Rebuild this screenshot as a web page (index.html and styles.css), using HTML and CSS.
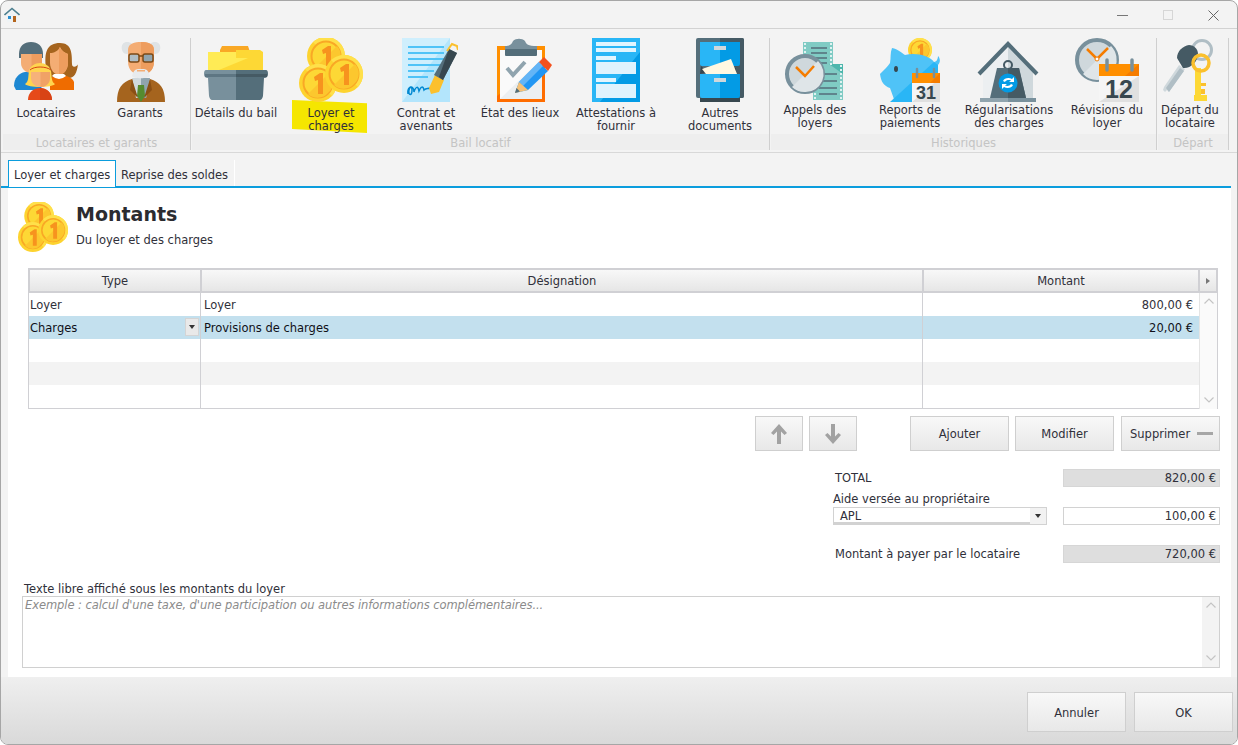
FILE: index.html
```html
<!DOCTYPE html>
<html lang="fr">
<head>
<meta charset="utf-8">
<title>Loyer et charges</title>
<link rel="stylesheet" href="styles.css">
</head>
<body>
<svg class="defs" width="0" height="0" aria-hidden="true">
  <defs>
    <g id="coin">
      <circle r="19" fill="#fdd32f"/>
      <path d="M-13-14A19 19 0 0 1 19 0 19 19 0 0 1 14 13Z" fill="#ffe04a"/>
      <circle r="14.500" fill="#fdd835" stroke="#f9a825" stroke-width="2"/>
      <path d="M-10 11 11-10A14 14 0 0 1 10 10 14 14 0 0 1-10 11Z" fill="#fcc72e"/>
      <path d="M-4-6 2-10H5V11H0V-3L-3-2Z" fill="#f7931e"/>
    </g>
    <g id="coins">
      <use href="#coin" x="27" y="18"/>
      <use href="#coin" x="19" y="45"/>
      <use href="#coin" x="45" y="36"/>
    </g>
  </defs>
</svg>
<div class="window">
  <header class="titlebar">
    <svg class="app-icon" viewBox="0 0 16 16" width="16" height="16"><path d="M3 7V15H13V7L8 3Z" fill="#eef3f5"/><path d="M0.500 8 8 1.500 15.500 8" fill="none" stroke="#4d7f8f" stroke-width="1.600"/><rect x="9" y="9" width="3" height="6" fill="#b5651d"/><rect x="4" y="9" width="3" height="3" fill="#2a8fd0"/></svg>
    <div class="win-controls">
      <span class="win-min"></span>
      <span class="win-max"></span>
      <svg class="win-close" viewBox="0 0 11 11" width="11" height="11"><path d="M0.500 0.500 10.500 10.500M10.500 0.500 0.500 10.500" stroke="#666" stroke-width="1" fill="none"/></svg>
    </div>
  </header>

  <nav class="ribbon">
    <section class="group g-tenants">
      <div class="items">
        <div class="item w88">
          <svg class="icon" viewBox="0 0 64 64" width="64" height="64">
            <path d="M0 48C0 40 5 35 11 34H24L28 52H2Z" fill="#1e88d2"/>
            <path d="M5 16C5 8 10 4 17 4 24 4 29 8 29 16V20H5Z" fill="#546e7a"/>
            <path d="M7 16H28V25C28 31 23 35 17.500 35 12 35 7 31 7 25Z" fill="#f4ad74"/>
            <path d="M17.500 16H28V25C28 31 23 35 17.500 35Z" fill="#ee9d5e"/>
            <path d="M32 30C30 14 33 5 46 5 58 5 58 16 58 26 58 31 64 28 64 26 63 35 60 40 55 40H36Z" fill="#a5641e"/>
            <path d="M36 15C40 15 44 13 46 9 48 13 51 15 54 16V25C54 32 49 37 45 37 41 37 36 32 36 25Z" fill="#f4ad74"/>
            <path d="M45 9C48 13 51 15 54 16V25C54 32 49 37 45 37Z" fill="#ee9d5e"/>
            <path d="M36 52V42C38 38 42 37 45 37 49 37 58 38 60 44V52Z" fill="#ef6c00"/>
            <path d="M38 38Q45 44 52 38L50 36H40Z" fill="#fff"/>
            <path d="M14 62C14 54 20 50 26 50 32 50 38 54 38 62Z" fill="#e64a19"/>
            <path d="M26 50C32 50 38 54 38 62H26Z" fill="#d84315"/>
            <path d="M11 46C15 44 14 38 15 33 16 28 21 25 26 25 31 25 36 28 37 33 38 38 37 44 41 46 38 50 14 50 11 46Z" fill="#ffd54f"/>
            <path d="M17 34H36V40C36 46 31 49 26.500 49 22 49 17 46 17 40Z" fill="#f6b27a"/>
            <path d="M26.500 34H36V40C36 46 31 49 26.500 49Z" fill="#f0a266"/>
            <path d="M16 32C20 28 32 28 37 32" fill="none" stroke="#d84315" stroke-width="1"/>
          </svg>
          <span class="label">Locataires</span>
        </div>
        <div class="item w100">
          <svg class="icon" viewBox="0 0 64 64" width="64" height="64">
            <path d="M9 64C9 50 14 44 24 41L33 39 42 41C52 44 57 50 57 64Z" fill="#a5641e"/>
            <path d="M24 40H42L38 60H28Z" fill="#cfd8dc"/>
            <path d="M33 40H42L38 60H33Z" fill="#90a4ae"/>
            <path d="M30 47H36L37 58 33 64 29 58Z" fill="#558b2f"/>
            <path d="M24 41 30 60 22 52ZM42 41 36 60 44 52Z" fill="#8a4f14"/>
            <path d="M14 12C12 4 20 2 24 6H42C46 2 54 4 52 12 50 18 44 16 42 14H24C22 16 16 18 14 12Z" fill="#dfe3e5"/>
            <path d="M20 12C20 5 27 4 33 4 39 4 46 5 46 12V24C46 32 40 37 33 37 26 37 20 32 20 24Z" fill="#f4ad74"/>
            <path d="M33 4C39 4 46 5 46 12V24C46 32 40 37 33 37Z" fill="#ee9d5e"/>
            <path d="M24 38C26 30 30 31 33 31 36 31 40 30 42 38 40 41 26 41 24 38Z" fill="#e8ebed"/>
            <rect x="29" y="32" width="8" height="1.500" fill="#f4ad74"/>
            <rect x="21" y="16" width="10" height="8" rx="2" fill="#b0bec5" stroke="#7b4a17" stroke-width="1.500"/>
            <rect x="35" y="16" width="10" height="8" rx="2" fill="#90a4ae" stroke="#7b4a17" stroke-width="1.500"/>
            <path d="M31 18H35" stroke="#7b4a17" stroke-width="1.500"/>
          </svg>
          <span class="label">Garants</span>
        </div>
      </div>
      <div class="band">Locataires et garants</div>
    </section>

    <section class="group g-lease">
      <div class="items">
        <div class="item w90">
          <svg class="icon" viewBox="0 0 64 64" width="64" height="64">
            <path d="M16 12 18 8H44L46 14H16Z" fill="#f9a825"/>
            <path d="M4 14H59V34H4Z" fill="#ffeb55"/>
            <path d="M10 34 59 14V34Z" fill="#fdd835"/>
            <path d="M32 12H56L59 14V20H32Z" fill="#fdd835"/>
            <path d="M2 32H32V62H8Q6 62 5 58L4 40Q0 40 0 36 0 32 2 32Z" fill="#78909c"/>
            <path d="M32 32H62Q64 32 64 36 64 40 60 40L59 58Q58 62 56 62H32Z" fill="#546e7a"/>
            <rect x="1" y="36" width="31" height="3" fill="#5e7683"/>
            <rect x="32" y="36" width="31" height="3" fill="#455a64"/>
          </svg>
          <span class="label">Détails du bail</span>
        </div>
        <div class="item item-active w100">
          <svg class="icon" viewBox="0 0 64 64" width="64" height="64"><use href="#coins"/></svg>
          <span class="label">Loyer et charges</span>
        </div>
        <div class="item w90">
          <svg class="icon" viewBox="0 0 64 64" width="64" height="64">
            <rect x="8" width="48" height="64" fill="#b3e5fc"/>
            <path d="M8 64V0H56Z" fill="#e1f5fe" opacity=".6"/>
            <path d="M14 9H50M14 15H50M14 21H50M14 27H50M14 33H40M14 39H34" stroke="#4fc3f7" stroke-width="2"/>
            <path d="M14 56C13 50 18 46 18 52 18 58 14 58 15 52 17 46 20 50 20 54 22 48 24 48 25 53 27 48 29 48 30 52 32 50 34 51 36 50" fill="none" stroke="#0288d1" stroke-width="1.500"/>
            <path d="M35 50 41 37 50 42 45 54 37 56Z" fill="#fbc02d"/>
            <path d="M40 37 55 11 63 15 49 42Z" fill="#546e7a"/>
            <path d="M55 11 63 15 49 42 45 39Z" fill="#37474f"/>
            <path d="M53 13 58 6 63 8 64 12" fill="none" stroke="#fbc02d" stroke-width="2"/>
          </svg>
          <span class="label">Contrat et avenants</span>
        </div>
        <div class="item w98">
          <svg class="icon" viewBox="0 0 64 64" width="64" height="64">
            <rect x="9" y="8" width="48" height="56" fill="#ff8f00"/>
            <path d="M9 64V58L57 20V64Z" fill="#ff6d00"/>
            <rect x="12" y="12" width="42" height="49" fill="#fafafa"/>
            <path d="M12 61 54 20V61Z" fill="#eceff1"/>
            <path d="M17 12V8C22 8 24 6 25 3 28 0 34 0 37 3 38 6 40 8 49 8V12Z" fill="#78909c"/>
            <rect x="17" y="11" width="32" height="7" rx="1" fill="#546e7a"/>
            <path d="M19 30 25 37 37 24" fill="none" stroke="#90a4ae" stroke-width="4"/>
            <path d="M27 55 31 44 51 24 60 33 40 52Z" fill="#2196f3"/>
            <path d="M31 44 51 24 55 28 35 48Z" fill="#64b5f6"/>
            <path d="M51 24 56 19 64 27 60 33Z" fill="#f4511e"/>
            <path d="M27 55 31 44 40 52Z" fill="#f6c177"/>
            <path d="M27 55 28.500 50 32 53.500Z" fill="#546e7a"/>
          </svg>
          <span class="label">État des lieux</span>
        </div>
        <div class="item w94">
          <svg class="icon" viewBox="0 0 64 64" width="64" height="64">
            <rect x="8" width="48" height="64" fill="#29b6f6"/>
            <path d="M16 64 56 14V64Z" fill="#039be5"/>
            <path d="M12 4H52V8H12ZM12 10H52V14H12ZM12 18H32V22H12ZM12 40H32V44H12Z" fill="#e1f5fe"/>
            <path d="M12 24H52V36H12ZM12 46H52V60H12Z" fill="#dff3fd"/>
          </svg>
          <span class="label">Attestations à fournir</span>
        </div>
        <div class="item item-last w98">
          <svg class="icon" viewBox="0 0 64 64" width="64" height="64">
            <rect x="8" width="48" height="60" rx="2" fill="#546e7a"/>
            <path d="M32 0H54Q56 0 56 2V58Q56 60 54 60H32Z" fill="#455a64"/>
            <rect x="12" y="60" width="40" height="4" fill="#37474f"/>
            <path d="M12 4H32V28H14Q12 28 12 26Z" fill="#29b6f6"/>
            <path d="M32 4H52V26Q52 28 50 28H32Z" fill="#039be5"/>
            <rect x="26" y="8" width="12" height="4" fill="#cfd8dc"/>
            <path d="M13 28 22 36H48V30L12 36Z" fill="#37474f"/>
            <path d="M14 31 43 21 49 36H18Z" fill="#fff8e1"/>
            <path d="M12 36H32V60H14Q12 60 12 58Z" fill="#29b6f6"/>
            <path d="M32 36H52V58Q52 60 50 60H32Z" fill="#039be5"/>
            <rect x="26" y="40" width="12" height="4" fill="#cfd8dc"/>
          </svg>
          <span class="label">Autres documents</span>
        </div>
      </div>
      <div class="band">Bail locatif</div>
    </section>

    <section class="group g-history">
      <div class="items">
        <div class="item item-high w90">
          <svg class="icon" viewBox="0 0 64 64" width="64" height="64">
            <rect x="20" y="4" width="30" height="36" fill="#80cbc4"/>
            <rect x="30" y="26" width="30" height="36" fill="#80cbc4"/>
            <path d="M46 26H60V36Z" fill="#4db6ac"/>
            <path d="M22 5V39M48 5V27M32 27V61M58 27V61" stroke="#e0f2f1" stroke-width="2" stroke-dasharray="2 2"/>
            <path d="M28 10H44M28 15H44M28 20H44M28 25H44M36 36H54M36 43H54M36 50H54M36 56H54" stroke="#546e7a" stroke-width="1.500"/>
            <circle cx="22" cy="36" r="18" fill="#cfd8dc" stroke="#78909c" stroke-width="4"/>
            <path d="M9 49 35 23A18 18 0 0 1 22 54 18 18 0 0 1 9 49Z" fill="#dfe5e8"/>
            <path d="M13 29 22 38 31 28" fill="none" stroke="#f57c00" stroke-width="2.500"/>
          </svg>
          <span class="label">Appels des loyers</span>
        </div>
        <div class="item item-high w100">
          <svg class="icon" viewBox="0 0 64 64" width="64" height="64">
            <use href="#coin" transform="translate(42 12) scale(.63)"/>
            <path d="M14 10C20 11 24 15 27 17 38 14 52 18 56 24 59 24 60 20 60 18 62 20 63 24 60 27 L60 64H17L12 50C6 48 3 44 2 36 6 32 10 28 12 25 13 20 12 15 14 10Z" fill="#4fc3f7"/>
            <path d="M12 64 56 24 60 27V64Z" fill="#29b6f6"/>
            <ellipse cx="18" cy="31" rx="2" ry="3" fill="#37474f"/>
            <rect x="34" y="35" width="28" height="29" fill="#f5f5f5"/>
            <path d="M34 64 62 40V64Z" fill="#e0e0e0"/>
            <rect x="34" y="35" width="28" height="10" fill="#ff8f00"/>
            <path d="M52 45 62 35V45Z" fill="#f57c00"/>
            <path d="M39 31V39M56 31V39" stroke="#78909c" stroke-width="2.500" stroke-linecap="round"/>
            <text class="cal-31" x="48" y="61" text-anchor="middle">31</text>
          </svg>
          <span class="label">Reports de paiements</span>
        </div>
        <div class="item item-high w98">
          <svg class="icon" viewBox="0 0 64 64" width="64" height="64">
            <path d="M6 60V30L31 7 56 30V60Z" fill="#eceff1"/>
            <path d="M31 7 56 30V60H31Z" fill="#cfd8dc"/>
            <path d="M2 36 31 6 60 36" fill="none" stroke="#546e7a" stroke-width="4"/>
            <circle cx="31" cy="27" r="4" fill="none" stroke="#455a64" stroke-width="2"/>
            <path d="M20 30H42L49 60H13Z" fill="#546e7a"/>
            <path d="M31 30H42L49 60H31Z" fill="#455a64"/>
            <circle cx="31" cy="45" r="9.500" fill="#039be5"/>
            <path d="M26 43C27 40 32 39 35 41L37 39V44H32L34 42.500C32 41.500 29 42 28 44ZM36 47C35 50 30 51 27 49L25 51V46H30L28 47.500C30 48.500 33 48 34 46Z" fill="#fff"/>
            <rect x="3" y="60" width="28" height="4" fill="#90a4ae"/>
            <rect x="31" y="60" width="28" height="4" fill="#78909c"/>
          </svg>
          <span class="label">Régularisations des charges</span>
        </div>
        <div class="item item-high w98">
          <svg class="icon" viewBox="0 0 64 64" width="64" height="64">
            <circle cx="22" cy="22" r="20" fill="#cfd8dc" stroke="#78909c" stroke-width="4"/>
            <path d="M8 36 36 8A20 20 0 0 1 22 42 20 20 0 0 1 8 36Z" fill="#dfe5e8"/>
            <path d="M12 11 22 21 33 10" fill="none" stroke="#f57c00" stroke-width="2.500"/>
            <circle cx="22" cy="21" r="2" fill="#fff" stroke="#f57c00"/>
            <rect x="24" y="26" width="40" height="38" fill="#f5f5f5"/>
            <path d="M24 64 64 38V64Z" fill="#e0e0e0"/>
            <rect x="24" y="26" width="40" height="12" fill="#ff8f00"/>
            <path d="M50 38 64 26V38Z" fill="#f57c00"/>
            <path d="M32 22V32M57 22V32" stroke="#78909c" stroke-width="3.500" stroke-linecap="round"/>
            <text class="cal-12" x="44" y="60" text-anchor="middle">12</text>
          </svg>
          <span class="label">Révisions du loyer</span>
        </div>
      </div>
      <div class="band">Historiques</div>
    </section>

    <section class="group g-leave">
      <div class="items">
        <div class="item item-high item-narrow w66">
          <svg class="icon" viewBox="0 0 64 64" width="64" height="64">
            <circle cx="44" cy="12" r="9.500" fill="none" stroke="#b0bec5" stroke-width="3"/>
            <path d="M6 49 21 27 27 31 11 54 9 52 7 54 5 52Z" fill="#cfd8dc"/>
            <path d="M11 54 8 50 22 30 26 33Z" fill="#b0bec5"/>
            <path d="M19 20C19 13 25 8 31 7 36 7 40 11 40 16 40 24 32 31 25 30Z" fill="#455a64"/>
            <rect x="37" y="30" width="6" height="28" fill="#fdd835"/>
            <path d="M43 45H48V48H43ZM43 51H47V56H43Z" fill="#fbc02d"/>
            <rect x="36" y="57" width="13" height="6" fill="#fdd835"/>
            <circle cx="43" cy="25" r="8" fill="none" stroke="#fbc02d" stroke-width="3.500"/>
          </svg>
          <span class="label">Départ du locataire</span>
        </div>
      </div>
      <div class="band">Départ</div>
    </section>
  </nav>

  <div class="tabs">
    <div class="tab tab-active">Loyer et charges</div>
    <div class="tab">Reprise des soldes</div>
  </div>

  <main class="panel">
    <div class="heading">
      <svg class="heading-icon" viewBox="0 0 64 64" width="50" height="50"><use href="#coins"/></svg>
      <div>
        <h1>Montants</h1>
        <p>Du loyer et des charges</p>
      </div>
    </div>

    <div class="grid">
      <div class="grid-head">
        <div class="th">Type</div>
        <div class="th">Désignation</div>
        <div class="th">Montant</div>
        <div class="th-more"><svg viewBox="0 0 4 6" width="4" height="6"><path d="M0 0 4 3 0 6Z" fill="#777"/></svg></div>
      </div>
      <div class="grid-main">
        <div class="rows">
          <div class="row"><div class="cell">Loyer</div><div class="cell">Loyer</div><div class="cell num">800,00 €</div></div>
          <div class="row row-sel"><div class="cell cell-drop">Charges<span class="mini-drop"><i class="caret"></i></span></div><div class="cell">Provisions de charges</div><div class="cell num">20,00 €</div></div>
          <div class="row"><div class="cell"></div><div class="cell"></div><div class="cell"></div></div>
          <div class="row row-alt"><div class="cell"></div><div class="cell"></div><div class="cell"></div></div>
          <div class="row"><div class="cell"></div><div class="cell"></div><div class="cell"></div></div>
        </div>
        <div class="vscroll">
          <svg viewBox="0 0 10 6" width="10" height="6"><path d="M0.500 5.500 5 1 9.500 5.500" fill="none" stroke="#c4c4c4" stroke-width="1.200"/></svg>
          <svg viewBox="0 0 10 6" width="10" height="6"><path d="M0.500 0.500 5 5 9.500 0.500" fill="none" stroke="#c4c4c4" stroke-width="1.200"/></svg>
        </div>
      </div>
    </div>

    <div class="actions">
      <button class="btn btn-arrow"><svg viewBox="0 0 16 20" width="16" height="20"><path d="M8 0 16 9 13.500 11 10 7.500V20H6V7.500L2.500 11 0 9Z" fill="#a2a2a2"/></svg></button>
      <button class="btn btn-arrow"><svg viewBox="0 0 16 20" width="16" height="20"><path d="M8 20 16 11 13.500 9 10 12.500V0H6V12.500L2.500 9 0 11Z" fill="#a2a2a2"/></svg></button>
      <button class="btn btn-wide btn-first">Ajouter</button>
      <button class="btn btn-wide">Modifier</button>
      <button class="btn btn-wide btn-del">Supprimer<span class="minus"></span></button>
    </div>

    <div class="summary">
      <div class="sum-row sum-total">
        <span class="sum-label">TOTAL</span>
        <output class="value value-ro">820,00 €</output>
      </div>
      <div class="sum-aide">Aide versée au propriétaire</div>
      <div class="sum-row">
        <div class="select"><span class="select-text">APL</span><span class="select-btn"><i class="caret"></i></span></div>
        <output class="value">100,00 €</output>
      </div>
      <div class="sum-row sum-pay">
        <span class="sum-label">Montant à payer par le locataire</span>
        <output class="value value-ro">720,00 €</output>
      </div>
    </div>

    <div class="notes">
      <div class="notes-label">Texte libre affiché sous les montants du loyer</div>
      <div class="notes-box">
        <div class="notes-text">Exemple : calcul d'une taxe, d'une participation ou autres informations complémentaires...</div>
        <div class="vscroll vscroll-notes">
          <svg viewBox="0 0 10 6" width="10" height="6"><path d="M0.500 5.500 5 1 9.500 5.500" fill="none" stroke="#c4c4c4" stroke-width="1.200"/></svg>
          <svg viewBox="0 0 10 6" width="10" height="6"><path d="M0.500 0.500 5 5 9.500 0.500" fill="none" stroke="#c4c4c4" stroke-width="1.200"/></svg>
        </div>
      </div>
    </div>
  </main>

  <footer class="footer">
    <button class="btn btn-foot">Annuler</button>
    <button class="btn btn-foot">OK</button>
  </footer>
</div>
</body>
</html>
```

FILE: styles.css
```css
* { box-sizing: border-box; }
html, body { margin: 0; height: 100%; background: #fff; }
body {
  font-family: "DejaVu Sans", sans-serif;
  font-size: 11.5px;
  color: #30303a;
  overflow: hidden;
}
.defs { position: absolute; }

.window {
  width: 1238px;
  height: 745px;
  display: flex;
  flex-direction: column;
  background: #f3f3f3;
  border: 1px solid #a6a6a6;
  border-radius: 8px;
  overflow: hidden;
}

/* title bar */
.titlebar {
  flex: none;
  height: 28px;
  padding: 4px 0 0 3px;
  display: flex;
  justify-content: space-between;
  border-bottom: 1px solid #d2d2d2;
}
.app-icon { display: block; margin-top: 2px; }
.win-controls {
  display: flex;
  align-items: center;
  gap: 35px;
  height: 16px;
  margin: 2px 18px 0 0;
}
.win-min { width: 11px; height: 1px; background: #777; }
.win-max { width: 10px; height: 10px; border: 1px solid #d6d6d6; }

/* ribbon */
.ribbon {
  flex: none;
  height: 124px;
  padding-top: 9px;
  display: flex;
  border-bottom: 1px solid #d8d8d8;
}
.group {
  height: 112px;
  display: flex;
  flex-direction: column;
  border-right: 1px solid #cfcfcf;
}
.g-tenants { width: 190px; padding-left: 1px; }
.g-lease { width: 579px; }
.g-history { width: 387px; }
.g-leave { width: 72px; }
.items { flex: none; height: 96px; display: flex; }
.band {
  flex: none;
  height: 16px;
  margin-left: 1px;
  background: #eeeeee;
  color: #c4c4c4;
  text-align: center;
  line-height: 19px;
}

.item {
  position: relative;
  display: flex;
  flex-direction: column;
  align-items: center;
  text-align: center;
}
.w66 { width: 66px; }
.w88 { width: 88px; }
.w90 { width: 90px; }
.w94 { width: 94px; }
.w98 { width: 98px; }
.w100 { width: 100px; }
.item-last { margin-left: 8px; }
.icon { display: block; flex: none; position: relative; }
.label {
  position: relative;
  display: block;
  width: 90px;
  margin-top: 5px;
  line-height: 13px;
}
.item-high .label { margin-top: 2px; width: 92px; }
.item-narrow .label { width: 66px; }
.item-active .label { width: 60px; }
.item-active::before {
  content: "";
  position: absolute;
  left: 11px;
  top: 62px;
  width: 75px;
  height: 33px;
  background: #f5e600;
  clip-path: polygon(0 0, 100% 10%, 100% 100%, 0 88%);
}
.cal-31 { font: bold 18px "Liberation Sans", sans-serif; fill: #37474f; }
.cal-12 { font: bold 25px "Liberation Sans", sans-serif; fill: #37474f; }

/* tabs */
.tabs {
  flex: none;
  height: 35px;
  padding: 7px 0 0 7px;
  margin-right: 6px;
  display: flex;
  align-items: flex-end;
  border-bottom: 2px solid #0b9ddd;
}
.tab {
  height: 26px;
  padding: 0 6px 0 5px;
  line-height: 31px;
  border-right: 1px solid #fff;
  width: 119px;
  white-space: nowrap;
}
.tab-active {
  width: 108px;
  height: 27px;
  margin-bottom: -1px;
  padding-left: 5px;
  line-height: 29px;
  background: #fff;
  border: 1px solid #0b9ddd;
  border-bottom: 0;
  position: relative;
}

/* panel */
.panel {
  flex: none;
  height: 489px;
  margin: 0 6px 0 7px;
  padding: 0 11px 0 14px;
  background: #fff;
  display: flex;
  flex-direction: column;
}
.heading {
  flex: none;
  height: 80px;
  display: flex;
  padding-top: 14px;
  margin-left: -4px;
}
.heading-icon { display: block; margin-right: 8px; }
.heading h1 {
  margin: 0;
  font-size: 19px;
  line-height: 25px;
  font-weight: bold;
  color: #2b2b30;
}
.heading p { margin: 6px 0 0; line-height: 14px; }

/* grid */
.grid {
  flex: none;
  width: 1190px;
  margin-left: 6px;
  height: 141px;
  border: 1px solid #d0d0d4;
  border-top-width: 2px;
}
.grid-head { height: 23px; display: flex; border-bottom: 2px solid #d0d0d4; }
.th, .th-more {
  background: linear-gradient(#f8f8f8, #e6e6e6);
  border-left: 1px solid #d0d0d4;
  border-right: 1px solid #d0d0d4;
  text-align: center;
  line-height: 23px;
}
.th:nth-child(1) { width: 172px; }
.th:nth-child(2) { width: 722px; }
.th:nth-child(3) { width: 276px; }
.th-more { flex: 1; display: flex; align-items: center; justify-content: center; }
.grid-main { display: flex; height: 116px; }
.rows { width: 1170px; }
.row { display: flex; height: 23px; }
.row:last-child { height: 24px; }
.row-sel { background: #c3e0ee; color: #101018; }
.row-alt { background: #f3f3f3; }
.cell {
  line-height: 25px;
  padding: 0 1px;
  border-right: 1px solid #d0d0d4;
  position: relative;
}
.cell:nth-child(1) { width: 172px; }
.cell:nth-child(2) { width: 722px; padding-left: 3px; }
.cell:nth-child(3) { width: 276px; border-right: 0; }
.num { text-align: right; padding-right: 6px; }
.mini-drop {
  position: absolute;
  right: 1px;
  top: 2px;
  width: 14px;
  height: 18px;
  background: #e9e9e9;
  border: 1px solid #d4d4d4;
  display: flex;
  align-items: center;
  justify-content: center;
}
.caret {
  display: block;
  width: 0;
  height: 0;
  border: 3.500px solid transparent;
  border-top: 4px solid #333;
  border-bottom: 0;
}
.vscroll {
  flex: 1;
  background: #fafafa;
  border-left: 1px solid #e4e4e4;
  display: flex;
  flex-direction: column;
  align-items: center;
  justify-content: space-between;
  padding: 5px 0 6px;
}
.vscroll svg { display: block; }

/* buttons */
.btn {
  font: inherit;
  color: inherit;
  background: linear-gradient(#f8f8f8, #e8e8e8);
  border: 1px solid #cfcfcf;
  padding: 1px 0 0;
  display: flex;
  align-items: center;
  justify-content: center;
}
.actions {
  flex: none;
  margin-top: 7px;
  height: 35px;
  display: flex;
  justify-content: flex-end;
}
.btn-arrow { width: 48px; height: 35px; margin-right: 6px; }
.btn-wide { width: 99px; height: 35px; margin-left: 6px; }
.btn-first { margin-left: 47px; }
.btn-del { margin-left: 7px; justify-content: space-between; padding: 1px 6px 0 8px; }
.minus { width: 16px; height: 3px; background: #a6a6a6; margin-top: -2px; }

/* summary */
.summary {
  flex: none;
  margin-top: 18px;
  align-self: flex-end;
  width: 387px;
}
.sum-row { display: flex; justify-content: space-between; align-items: center; height: 18px; }
.sum-label { padding-left: 2px; }
.value {
  display: block;
  width: 157px;
  height: 18px;
  line-height: 17px;
  text-align: right;
  padding-right: 3px;
  background: #fff;
  border: 1px solid #d2d2d2;
}
.value-ro { background: #dedede; border-color: #d6d6d6; }
.sum-aide { height: 20px; padding-top: 5px; line-height: 15px; }
.select {
  width: 214px;
  height: 18px;
  display: flex;
  border: 1px solid #d2d2d2;
  border-bottom-width: 3px;
  background: #e9e9e9;
}
.select-text { flex: 1; background: #fff; padding-left: 6px; line-height: 16px; }
.select-btn { width: 16px; display: flex; align-items: center; justify-content: center; background: #f2f2f2; margin-bottom: -2px; }
.sum-pay { margin-top: 20px; }

/* notes */
.notes { flex: none; margin-top: 20px; width: 1198px; }
.notes-label { line-height: 13px; height: 13px; padding-left: 2px; }
.notes-box {
  height: 72px;
  display: flex;
  justify-content: space-between;
  border: 1px solid #d0d0d0;
}
.notes-text { padding: 1px 2px; font-style: italic; color: #8b8b8b; line-height: 14px; letter-spacing: -0.07px; }
.vscroll-notes { flex: none; width: 17px; border-left: 0; background: #f3f3f3; }

/* footer */
.footer {
  flex: 1;
  display: flex;
  justify-content: flex-end;
  align-items: flex-start;
  gap: 8px;
  padding: 15px 4px 0 0;
  background: linear-gradient(#efefef, #d9d9d9);
}
.btn-foot { width: 99px; height: 40px; }
```
